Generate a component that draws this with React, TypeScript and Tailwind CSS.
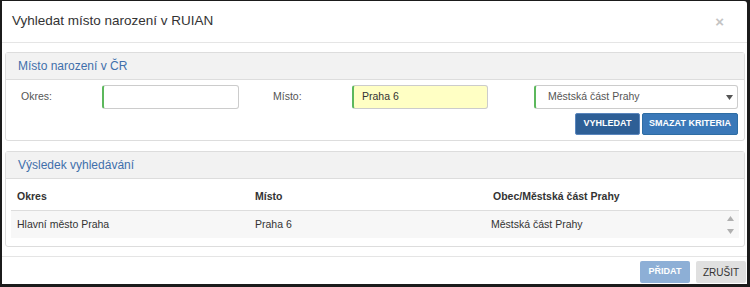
import React from "react";

function Panel({ title, children }: { title: string; children: React.ReactNode }) {
  return (
    <section className="ml-[3px] w-[740px] rounded-[3px] border border-[#dddddd] bg-white">
      <div className="flex h-[27px] items-center border-b border-[#dddddd] bg-[#f2f2f2] px-[12px] text-[12px] text-[#3f6fab]">
        {title}
      </div>
      {children}
    </section>
  );
}

function Triangle({ up, className }: { up?: boolean; className: string }) {
  return (
    <svg width="7" height="5" viewBox="0 0 7 5" className={className}>
      <path d={up ? "M0 5 L3.5 0 L7 5 Z" : "M0 0 L7 0 L3.5 5 Z"} fill="currentColor" />
    </svg>
  );
}

export default function App() {
  return (
    <div
      className="h-[287px] w-[750px] bg-[#1b1b1b] pl-[2px] pt-[1px] text-[#333333]"
      style={{ fontFamily: '"Liberation Sans", Arial, sans-serif' }}
    >
      <div className="flex h-[283px] w-[745px] flex-col rounded-tr-[3px] bg-white">
        <header className="flex h-[42px] items-center border-b border-[#e5e5e5] pl-[10px] pb-[1px]">
          <h1 className="text-[13.5px] text-[#333333]">Vyhledat místo narození v RUIAN</h1>
          <span className="ml-auto mr-[23px] text-[15px] font-bold leading-none text-[#c4c4c4]">×</span>
        </header>

        <div className="pt-[9px]">
          <Panel title="Místo narození v ČR">
            <div className="px-[5px] pb-[5px] pt-[5px] text-[10.5px]">
              <div className="flex h-[24px] items-center">
                <label className="w-[91px] pl-[10px] text-[#555555]">Okres:</label>
                <div className="h-[24px] w-[137px] rounded-[3px] border border-[#cccccc] border-l-2 border-l-[#5cb85c] bg-white" />
                <label className="ml-[34px] w-[79px] text-[#555555]">Místo:</label>
                <div className="flex h-[24px] w-[136px] items-center rounded-[3px] border border-[#cccccc] border-l-2 border-l-[#5cb85c] bg-[#ffffc4] pl-[8px] text-[#333333]">
                  Praha 6
                </div>
                <div className="ml-[46px] flex h-[24px] w-[204px] items-center rounded-[3px] border border-[#cccccc] border-l-2 border-l-[#5cb85c] bg-white pl-[12px] pr-[4px] text-[#555555]">
                  Městská část Prahy
                  <Triangle className="ml-auto text-[#555555]" />
                </div>
              </div>
              <div className="mt-[4px] flex justify-end gap-[2px] pr-[1px]">
                <button className="h-[22px] w-[65px] rounded-[2px] border border-[#5a86bd] bg-[#2e5f96] text-[9px] font-bold text-white">
                  VYHLEDAT
                </button>
                <button className="h-[22px] w-[96px] rounded-[2px] border border-[#2e6da4] bg-[#3a78b8] text-[9px] font-bold text-white">
                  SMAZAT KRITERIA
                </button>
              </div>
            </div>
          </Panel>

          <div className="h-[10px]" />

          <Panel title="Výsledek vyhledávání">
            <div className="px-[5px] pb-[8px] pt-[5px] text-[10.5px]">
              <div className="flex h-[27px] items-center border-b border-[#dddddd] font-bold">
                <div className="w-[238px] pl-[6px]">Okres</div>
                <div className="w-[238px] pl-[6px]">Místo</div>
                <div className="pl-[6px]">Obec/Městská část Prahy</div>
              </div>
              <div className="flex h-[27px] items-center bg-[#f7f7f7]">
                <div className="w-[238px] pl-[6px]">Hlavní město Praha</div>
                <div className="w-[238px] pl-[6px]">Praha 6</div>
                <div className="pl-[4px]">Městská část Prahy</div>
                <div className="ml-auto mr-[5px] flex flex-col gap-[8px] text-[#b0b0b0]">
                  <Triangle up className="" />
                  <Triangle className="" />
                </div>
              </div>
            </div>
          </Panel>
        </div>

        <footer className="mt-[9px] flex justify-end gap-[6px] border-t border-[#e5e5e5] pr-[1px] pt-[4px]">
          <button className="h-[22px] w-[50px] rounded-[2px] bg-[#8dafd6] text-[9px] font-bold text-white">PŘIDAT</button>
          <button className="h-[22px] w-[50px] rounded-[2px] bg-[#e0e0e0] text-[10px] font-normal text-[#333333]">ZRUŠIT</button>
        </footer>
      </div>
    </div>
  );
}
